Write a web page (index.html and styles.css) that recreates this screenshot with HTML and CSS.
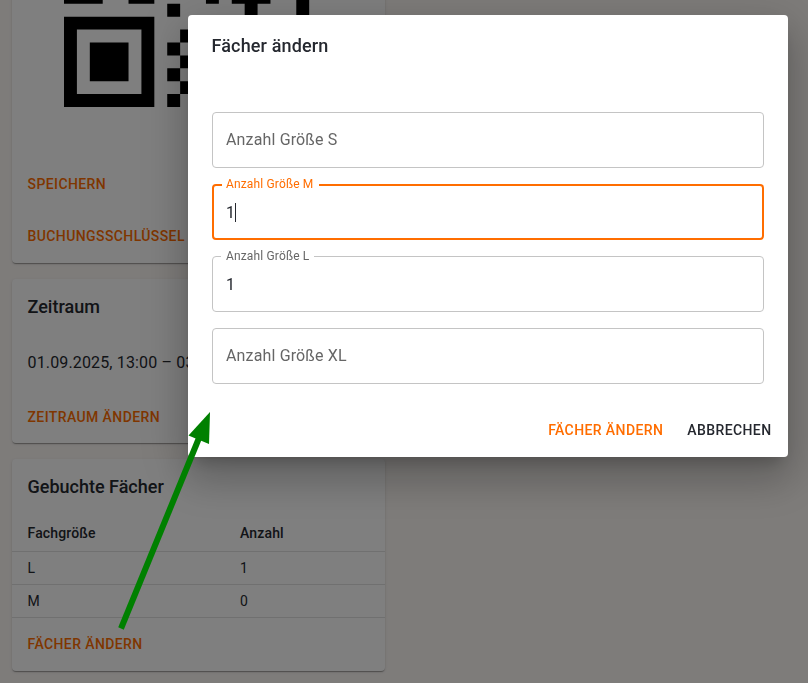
FILE: index.html
```html
<!DOCTYPE html>
<html lang="de">
<head>
<meta charset="utf-8">
<title>Buchung</title>
<link rel="stylesheet" href="styles.css">
</head>
<body>
<main class="page">
  <section class="card card-qr">
    <svg class="qr" width="271" height="271" viewBox="0 0 21 21">
      <path d="M0 12h3v1H0zM5 12h2v1H5zM11 12h1v1h-1zM13 12h3v1h-1v1h-1v-1h-1zM18 12h1v2h-1zM8 13h1v1H8z"/>
      <path fill-rule="evenodd" d="M0 14h7v7H0zM1 15v5h5v-5zM2 16h3v3H2z"/>
      <path d="M9 15h1v1H9zM8 16h1v1H8zM9 17h1v1H9zM8 18h1v1H8zM9 19h1v1H9zM8 20h1v1H8z"/>
    </svg>
    <a class="btn btn-save">Speichern</a>
    <a class="btn btn-key">Buchungsschlüssel</a>
  </section>
  <section class="card card-period">
    <h2 class="title">Zeitraum</h2>
    <p class="period">01.09.2025, 13:00 – 03</p>
    <a class="btn btn-period">Zeitraum ändern</a>
  </section>
  <section class="card card-slots">
    <h2 class="title">Gebuchte Fächer</h2>
    <table class="slots">
      <tr><th>Fachgröße</th><th>Anzahl</th></tr>
      <tr><td>L</td><td>1</td></tr>
      <tr><td>M</td><td>0</td></tr>
    </table>
    <a class="btn btn-slots">Fächer ändern</a>
  </section>
</main>
<div class="backdrop"></div>
<div class="dialog">
  <h2 class="title">Fächer ändern</h2>
  <div class="fields">
    <div class="field"><span class="placeholder">Anzahl Größe S</span></div>
    <div class="field focused"><span class="label">Anzahl Größe M</span><span class="value">1</span><i class="caret"></i></div>
    <div class="field"><span class="label">Anzahl Größe L</span><span class="value">1</span></div>
    <div class="field"><span class="placeholder">Anzahl Größe XL</span></div>
  </div>
  <div class="actions">
    <a class="btn">Fächer ändern</a>
    <a class="btn dark">Abbrechen</a>
  </div>
</div>
<svg class="arrow" width="808" height="683" viewBox="0 0 808 683">
  <path d="M121 628.5L199 438" stroke="#008000" stroke-width="6" fill="none"/>
  <path d="M210 412L188.5 435.5L209 444z" fill="#008000"/>
</svg>
</body>
</html>
```
FILE: styles.css
```css
* { box-sizing: border-box; }
body {
  margin: 0;
  height: 683px;
  overflow: hidden;
  background: #fcf8f5;
  color: #25282f;
  font: 400 16px/24px Roboto, sans-serif;
  letter-spacing: 0.15px;
}
h2, p { margin: 0; }
.page {
  display: flex;
  flex-direction: column;
  gap: 16px;
  width: 373px;
  margin-left: 12px;
}
.card {
  display: flex;
  flex-direction: column;
  background: #fff;
  border-radius: 4px;
  overflow: hidden;
  box-shadow: 0 2px 1px -1px rgba(0,0,0,.2), 0 1px 1px rgba(0,0,0,.14), 0 1px 3px rgba(0,0,0,.12);
}
.card-qr { height: 443px; margin-top: -180px; }
.qr { flex: none; align-self: center; margin: 16px 0 0 1px; }
.card-period { height: 164px; }
.card-slots { height: 212px; }
.title { font-size: 18px; font-weight: 500; line-height: 24px; letter-spacing: 0.15px; }
.card .title { padding: 16px 15.5px 0; letter-spacing: 0; }
.period { padding: 32px 15.5px 0; white-space: nowrap; }
.btn {
  color: #ff6d00;
  font-size: 14px;
  font-weight: 500;
  line-height: 26px;
  letter-spacing: 0.4px;
  text-transform: uppercase;
  white-space: nowrap;
}
.card .btn { padding: 0 15.5px; }
.btn-save { margin-top: 64px; }
.btn-key { margin-top: 26px; }
.btn-period { margin-top: 29px; }
.btn-slots { margin-top: 13px; }
.slots {
  width: 100%;
  margin-top: 16px;
  border-collapse: separate;
  border-spacing: 0;
  table-layout: fixed;
  font-size: 14px;
  line-height: 20px;
}
.slots th, .slots td {
  padding: 6px 15.5px;
  border-bottom: 1px solid #e0e0e0;
  text-align: left;
  font-weight: 400;
}
.slots th { padding-top: 8px; padding-bottom: 8px; font-weight: 500; }
.slots th:first-child { width: 212.5px; }
.backdrop { position: fixed; inset: 0; background: rgba(0,0,0,.5); }
.dialog {
  position: absolute;
  left: 188px;
  top: 15px;
  width: 600px;
  height: 442px;
  display: flex;
  flex-direction: column;
  background: #fff;
  border-radius: 4px;
  box-shadow: 0 11px 15px -7px rgba(0,0,0,.2), 0 24px 38px 3px rgba(0,0,0,.14), 0 9px 46px 8px rgba(0,0,0,.12);
}
.dialog .title { padding: 19px 23.5px 0; }
.fields { display: grid; gap: 16px; padding: 54px 24px 0; }
.field {
  position: relative;
  display: flex;
  align-items: center;
  height: 56px;
  padding: 0 13px;
  border: 1px solid #c4c4c4;
  border-radius: 4px;
}
.focused { border: 2px solid #ff6d00; padding: 0 12px; }
.placeholder { color: #666; }
.value { padding-top: 2px; }
.label {
  position: absolute;
  left: 8px;
  top: -11px;
  padding: 0 5px;
  background: #fff;
  color: #666;
  font-size: 12px;
  line-height: 20px;
}
.focused .label { color: #ff6d00; padding: 0 6px 0 4px; top: -12px; }
.caret { width: 1px; height: 19px; background: #25282f; }
.actions {
  display: flex;
  justify-content: flex-end;
  gap: 24px;
  margin-top: auto;
  padding: 0 16.5px 14px;
}
.dark { color: #25282f; }
.arrow { position: absolute; left: 0; top: 0; }
```
